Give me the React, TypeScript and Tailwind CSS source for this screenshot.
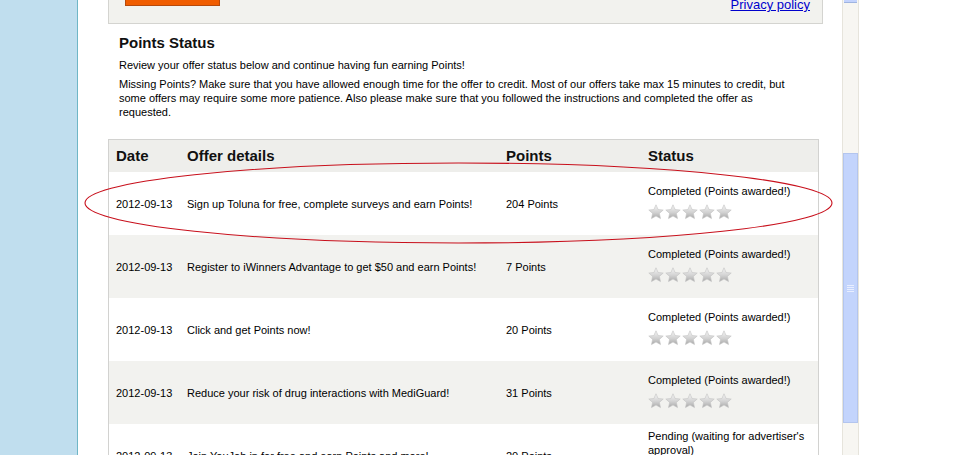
import React from 'react';

const ROWS = [
  { date: '2012-09-13', offer: 'Sign up Toluna for free, complete surveys and earn Points!', points: '204 Points', status: 'Completed (Points awarded!)' },
  { date: '2012-09-13', offer: 'Register to iWinners Advantage to get $50 and earn Points!', points: '7 Points', status: 'Completed (Points awarded!)' },
  { date: '2012-09-13', offer: 'Click and get Points now!', points: '20 Points', status: 'Completed (Points awarded!)' },
  { date: '2012-09-13', offer: 'Reduce your risk of drug interactions with MediGuard!', points: '31 Points', status: 'Completed (Points awarded!)' },
  { date: '2012-09-13', offer: 'Join YouJob.in for free and earn Points and more!', points: '20 Points', status: "Pending (waiting for advertiser's approval)" },
];

function Star() {
  return (
    <svg width="16" height="16" viewBox="0 0 16 16">
      <defs>
        <linearGradient id="sg" x1="0" y1="0" x2="0" y2="1">
          <stop offset="0" stopColor="#f6f6f6" />
          <stop offset="0.55" stopColor="#d2d2d2" />
          <stop offset="1" stopColor="#a8a8a8" />
        </linearGradient>
      </defs>
      <path
        d="M8 0.8 L10.1 5.5 L15.2 6 L11.4 9.4 L12.5 14.6 L8 12 L3.5 14.6 L4.6 9.4 L0.8 6 L5.9 5.5 Z"
        fill="url(#sg)"
        stroke="#c2c2c2"
        strokeWidth="0.6"
      />
    </svg>
  );
}

export default function App() {
  return (
    <div className="relative flex w-[960px] h-[455px] overflow-hidden bg-white" style={{ fontFamily: '"Liberation Sans", Arial, sans-serif' }}>
      <div className="w-[78px] shrink-0 bg-[#c0deee] border-r border-[#6fb6c6]" />

      <div className="w-[764px] shrink-0 pl-[30px] text-[11px] leading-[14px] text-black">
        {/* top panel */}
        <div className="w-[715px] h-[24px] flex justify-between bg-[#f2f2ee] border-x border-b border-[#d4d4d0]">
          <div className="ml-[16px] -mt-[24px] w-[95px] h-[30px] bg-[#f05d00] border border-[#b64a0c]" />
          <a className="mr-[12px] -mt-[3px] text-[13px] leading-[15px] text-[#0000cc] underline">Privacy policy</a>
        </div>

        <div className="pl-[11px]">
          <h1 className="mt-[10px] text-[15px] leading-[18px] font-bold text-[#111]">Points Status</h1>
          <p className="mt-[6px]">Review your offer status below and continue having fun earning Points!</p>
          <p className="mt-[5px] w-[680px]">
            Missing Points? Make sure that you have allowed enough time for the offer to credit. Most of our offers take max 15 minutes to credit, but some offers may require some more patience. Also please make sure that you followed the instructions and completed the offer as requested.
          </p>
        </div>

        <div className="mt-[20px] w-[711px] border border-[#d2d2d0]">
          <div className="grid grid-cols-[78px_319px_142px_1fr] h-[32px] items-center bg-[#eeeeeb] text-[15px] font-bold text-[#111]">
            <div className="pl-[7px]">Date</div>
            <div>Offer details</div>
            <div>Points</div>
            <div>Status</div>
          </div>
          {ROWS.map((r, i) => (
            <div key={i} className={`grid grid-cols-[78px_319px_142px_1fr] h-[63px] items-center ${i % 2 === 1 ? 'bg-[#f2f2ef]' : 'bg-white'}`}>
              <div className="pl-[7px]">{r.date}</div>
              <div>{r.offer}</div>
              <div>{r.points}</div>
              <div className="flex flex-col pr-[4px]">
                <div>{r.status}</div>
                <div className="mt-[6px] h-[20px] flex gap-[1px]">
                  {[0, 1, 2, 3, 4].map((s) => <Star key={s} />)}
                </div>
              </div>
            </div>
          ))}
        </div>
      </div>

      {/* scrollbar */}
      <div className="w-[17px] shrink-0 h-full flex flex-col bg-[#f7f6f2] border-x border-[#e6e4dc]">
        <div className="h-[3px] mx-[1px] bg-[#c3d3fd] border-b border-[#9fb4e0]" />
        <div className="mt-[150px] h-[270px] bg-[#c3d4fc] border border-[#b3c5ee] flex items-center justify-center">
          <div className="flex flex-col gap-[1px]">
            <div className="w-[7px] h-[1px] bg-[#e8eeff]" />
            <div className="w-[7px] h-[1px] bg-[#e8eeff]" />
            <div className="w-[7px] h-[1px] bg-[#e8eeff]" />
            <div className="w-[7px] h-[1px] bg-[#e8eeff]" />
          </div>
        </div>
      </div>

      <div className="flex-1" />

      <svg className="absolute left-0 top-0 pointer-events-none" width="960" height="455">
        <ellipse cx="458.5" cy="203" rx="373.5" ry="40" fill="none" stroke="#c8101c" strokeWidth="1.1" />
      </svg>
    </div>
  );
}
